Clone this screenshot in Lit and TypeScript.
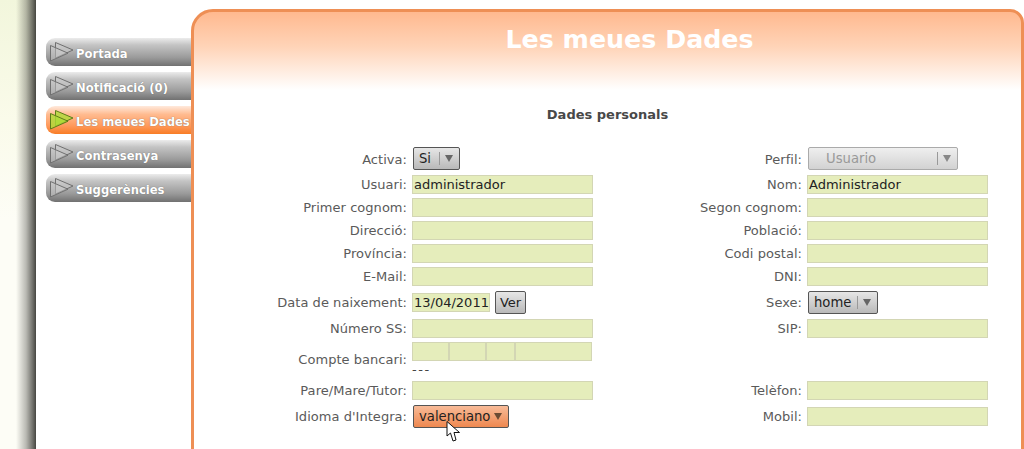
import { LitElement, html, css, svg } from "lit";
import { customElement } from "lit/decorators.js";

const menu = ["Portada", "Notificació (0)", "Les meues Dades", "Contrasenya", "Suggerències"];

const arrows = (active: boolean) => {
  const fill = active ? "#aedc38" : "#d0d0d0";
  const opacity = active ? "0.8" : "0.45";
  const stroke = active ? "#5e7d1a" : "#707070";
  return html`<svg class="arrows" width="25" height="20" viewBox="0 0 25 20">
    ${svg`<path d="M5.5 .5 L23 8 L5.5 16 Z" fill="${fill}" fill-opacity="${opacity}" stroke="${stroke}" stroke-width="1"/>
    <path d="M.5 3.5 L18 11.2 L.5 19 Z" fill="${fill}" fill-opacity="${opacity}" stroke="${stroke}" stroke-width="1"/>`}
  </svg>`;
};

const select = (text: string, cls: string) => html`<div class="select ${cls}">
  <span class="val">${text}</span><span class="sep"></span><span class="tri"></span>
</div>`;

const input = (v = "") => html`<div class="input">${v}</div>`;
const label = (t: string) => html`<div class="label">${t}</div>`;

@customElement("app-root")
export class AppRoot extends LitElement {
  static styles = css`
    :host { display: block; height: 449px; overflow: hidden; background: #fff; font-family: "DejaVu Sans", sans-serif; }
    .page { display: flex; height: 449px; }
    .strip { width: 36px; flex: none; background: linear-gradient(to right, rgba(0,0,0,0) 16px, rgba(60,60,55,.35) 26px, rgba(60,60,55,.75) 33px, rgba(60,60,55,.95) 36px), linear-gradient(#f2f6dc 0, #fafbea 120px, #fdfdf6 220px); }
    .side { width: 155px; flex: none; box-sizing: border-box; padding: 38px 0 0 10px; display: flex; flex-direction: column; gap: 6px; }
    .item { height: 28px; width: 146px; flex: none; border-radius: 9px 0 0 9px; display: flex; align-items: center; gap: 1px; padding-left: 4px; box-sizing: border-box;
      background: linear-gradient(#ececec 0, #c4c4c4 25%, #9a9a9a 70%, #717171 100%);
      color: #fff; font-weight: bold; font-size: 11.6px; white-space: nowrap; text-shadow: 0 0 1px #666; }
    .item.on { background: linear-gradient(#ffe9dc 0, #ffbb90 30%, #ff9a5c 70%, #f87c26 100%); }
    .item span { position: relative; top: 2px; }
    .arrows { flex: none; }
    .panel { flex: 1; margin-top: 9px; height: 480px; box-sizing: border-box; border: 3px solid #ee8f55; border-radius: 22px 14px 0 0;
      background: linear-gradient(#ffb98f 0, #ffd4b8 35px, #fff 78px); display: flex; flex-direction: column; align-items: center; }
    h1 { margin: 12px 0 0 44px; color: #fff; font-size: 25.3px; font-weight: bold; line-height: 32px; }
    h2 { margin: 51px 0 0; font-size: 13px; font-weight: bold; color: #484848; line-height: 16px; }
    .form { align-self: flex-start; margin-top: 24px; display: grid; grid-template-columns: 213px 181px 204px 181px; column-gap: 5px; row-gap: 4px;
      grid-template-rows: 24px repeat(5, 19px) 25px 19px 35px 19px 25px; align-items: center; }
    .label { text-align: right; font-size: 13px; letter-spacing: .04px; color: #5a5a5a; white-space: nowrap; }
    .input { height: 19px; box-sizing: border-box; background: #e5edbb; border: 1px solid #d3d6b4; font-size: 13px; line-height: 17px; padding-left: 1px; color: #222; white-space: nowrap; }
    .select { position: relative; height: 23px; margin-left: 1px; box-sizing: border-box; border: 1px solid #555; border-radius: 2px; background: linear-gradient(#e6e6e6, #b9b9b9);
      display: flex; align-items: center; font-size: 13.2px; color: #222; padding-left: 5px; }
    .top { align-self: start; }
    .si { width: 47px; }
    .home { width: 70px; }
    .perfil { width: 150px; border-color: #aaa; color: #999; background: linear-gradient(#efefef, #d2d2d2); padding-left: 17px; }
    .idioma { width: 96px; background: linear-gradient(#f8bb98, #ee8850); }
    .val { flex: 1; white-space: nowrap; }
    .sep { width: 1px; height: 13px; background: #999; margin-right: 5px; }
    .idioma .sep { display: none; }
    .tri { width: 0; height: 0; border-left: 4px solid transparent; border-right: 4px solid transparent; border-top: 7px solid #666; margin-right: 6px; }
    .perfil .tri { border-top-color: #888; }
    .idioma .tri { border-top-color: #6b4b33; margin-right: 6px; }
    .date { display: flex; align-items: center; gap: 5px; }
    .date .input { width: 78px; }
    .btn { width: 31px; height: 23px; box-sizing: border-box; border: 1px solid #555; border-radius: 2px; background: linear-gradient(#e6e6e6, #b9b9b9); font-size: 13px; text-align: center; line-height: 21px; color: #222; }
    .bank { display: flex; flex-direction: column; align-self: start; }
    .cells { display: flex; width: 180px; }
    .cells .input { flex: none; }
    .dash { font-size: 13px; line-height: 17px; color: #444; letter-spacing: 1.5px; }
    .hold { position: relative; }
    .cursor { position: absolute; left: 33px; top: 15px; }
  `;

  render() {
    return html`<div class="page">
      <div class="strip"></div>
      <nav class="side">
        ${menu.map((m, i) => html`<div class="item ${i === 2 ? "on" : ""}">${arrows(i === 2)}<span>${m}</span></div>`)}
      </nav>
      <main class="panel">
        <h1>Les meues Dades</h1>
        <h2>Dades personals</h2>
        <div class="form">
          ${label("Activa:")}${select("Si", "si top")}${label("Perfil:")}${select("Usuario", "perfil top")}
          ${label("Usuari:")}${input("administrador")}${label("Nom:")}${input("Administrador")}
          ${label("Primer cognom:")}${input()}${label("Segon cognom:")}${input()}
          ${label("Direcció:")}${input()}${label("Població:")}${input()}
          ${label("Província:")}${input()}${label("Codi postal:")}${input()}
          ${label("E-Mail:")}${input()}${label("DNI:")}${input()}
          ${label("Data de naixement:")}
          <div class="date">${input("13/04/2011")}<div class="btn">Ver</div></div>
          ${label("Sexe:")}${select("home", "home")}
          ${label("Número SS:")}${input()}${label("SIP:")}${input()}
          ${label("Compte bancari:")}
          <div class="bank">
            <div class="cells">
              <div class="input" style="width:37px"></div><div class="input" style="width:37px"></div><div class="input" style="width:29px"></div><div class="input" style="width:77px"></div>
            </div>
            <div class="dash">---</div>
          </div>
          <div></div><div></div>
          ${label("Pare/Mare/Tutor:")}${input()}${label("Telèfon:")}${input()}
          ${label("Idioma d'Integra:")}
          <div class="hold">
            ${select("valenciano", "idioma")}
            <svg class="cursor" width="16" height="23" viewBox="0 0 16 23"><path d="M2 1.5 L2 16 L5.5 13 L8 21 L11 20 L9 12.5 L14.5 12.5 Z" fill="#fff" stroke="#111" stroke-width="1"/></svg>
          </div>
          ${label("Mobil:")}${input()}
        </div>
      </main>
    </div>`;
  }
}
